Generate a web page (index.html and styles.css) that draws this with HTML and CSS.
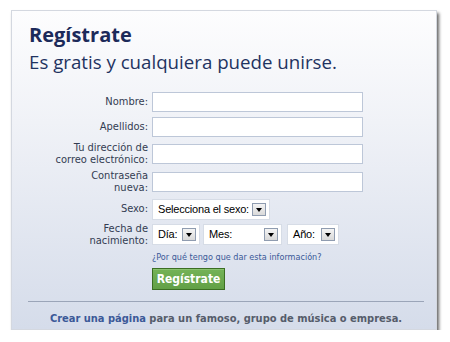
FILE: index.html
```html
<!DOCTYPE html>
<html lang="es">
<head>
    <meta charset="UTF-8">
    <title>Regístrate</title>
    <link rel="stylesheet" href="styles.css">
</head>
<body>
<div class="signup-box">
    <h1>Regístrate</h1>
    <h2>Es gratis y cualquiera puede unirse.</h2>

    <form class="signup-form" onsubmit="return false;">
        <div class="row">
            <label class="field-label">Nombre:</label>
            <input type="text" class="text-input">
        </div>
        <div class="row">
            <label class="field-label">Apellidos:</label>
            <input type="text" class="text-input">
        </div>
        <div class="row row-tall">
            <label class="field-label">Tu dirección de<br>correo electrónico:</label>
            <input type="text" class="text-input">
        </div>
        <div class="row row-tall">
            <label class="field-label">Contraseña<br>nueva:</label>
            <input type="password" class="text-input">
        </div>
        <div class="row row-sex">
            <label class="field-label">Sexo:</label>
            <span class="select select-sex">Selecciona el sexo:<span class="arrow"></span></span>
        </div>
        <div class="row row-tall">
            <label class="field-label">Fecha de<br>nacimiento:</label>
            <div class="date-selects">
                <span class="select select-day">Día:<span class="arrow"></span></span>
                <span class="select select-month">Mes:<span class="arrow"></span></span>
                <span class="select select-year">Año:<span class="arrow"></span></span>
            </div>
        </div>
        <div class="row row-link">
            <span class="field-label"></span>
            <a href="#" class="why-link">¿Por qué tengo que dar esta información?</a>
        </div>
        <div class="row row-button">
            <span class="field-label"></span>
            <button type="submit" class="signup-btn">Regístrate</button>
        </div>
    </form>

    <div class="footer-note">
        <a href="#">Crear una página</a> para un famoso, grupo de música o empresa.
    </div>
</div>
</body>
</html>
```

FILE: styles.css
```css
body {
    margin: 0;
    background-color: #fff;
    font-family: "DejaVu Sans Condensed", "DejaVu Sans", sans-serif;
}
.signup-box {
    box-sizing: border-box;
    width: 426px;
    height: 320px;
    margin: 10px 0 0 11px;
    padding: 12px 13px 0 17px;
    border: 1px solid #d4d8e0;
    background: linear-gradient(#fdfdfe, #f0f2f7 35%, #d5dcea);
    box-shadow: 2px 3px 3px rgba(0, 0, 0, 0.6);
}
h1 {
    margin: 0;
    font-family: "Open Sans", "Noto Sans", sans-serif;
    font-size: 20px;
    line-height: 24px;
    font-weight: bold;
    color: #1c2a5a;
}
h2 {
    margin: 0;
    font-family: "Open Sans", "Noto Sans", sans-serif;
    font-size: 18.7px;
    line-height: 29px;
    font-weight: normal;
    color: #1f3361;
}
.signup-form {
    margin-top: 16px;
}
.row {
    display: flex;
    align-items: center;
    margin-bottom: 5px;
    height: 20px;
}
.row-tall {
    height: 23px;
}
.row-sex {
    height: 22px;
    margin-bottom: 3px;
}
.field-label {
    flex: 0 0 119px;
    margin-right: 4px;
    text-align: right;
    font-size: 11px;
    line-height: 11.5px;
    color: #333c52;
}
.text-input {
    box-sizing: border-box;
    width: 211px;
    height: 20px;
    margin: 0;
    border: 1px solid #bdc7d8;
    background: #fff;
}
.select {
    position: relative;
    box-sizing: border-box;
    display: inline-block;
    height: 21px;
    padding: 0 0 0 5px;
    border: 1px solid #d6dce6;
    background: #fff;
    font-family: "Liberation Sans", Arial, sans-serif;
    font-size: 11px;
    letter-spacing: -0.2px;
    line-height: 19px;
    color: #000;
    white-space: nowrap;
}
.select-sex { width: 118px; }
.select-day { width: 48px; }
.select-month { width: 79px; }
.select-year { width: 52px; }
.date-selects {
    display: flex;
    gap: 3px;
}
.select-year { margin-left: 2px; }
.arrow {
    position: absolute;
    right: 3px;
    top: 3px;
    box-sizing: border-box;
    width: 14px;
    height: 13px;
    border: 1px solid #8f9cb0;
    background: linear-gradient(#f4f4f4, #d9d9d9);
}
.arrow::after {
    content: "";
    position: absolute;
    left: 3px;
    top: 4px;
    border-left: 3.5px solid transparent;
    border-right: 3.5px solid transparent;
    border-top: 4px solid #000;
}
.row-link {
    height: 12px;
    margin-top: 0;
    margin-bottom: 5px;
}
.why-link {
    font-size: 9px;
    color: #3b5998;
    text-decoration: none;
}
.row-button {
    height: 22px;
}
.signup-btn {
    height: 22px;
    width: 73px;
    padding: 0;
    border: 1px solid #3b6e22;
    background: linear-gradient(#74b357, #62a046);
    color: #fff;
    font-family: "DejaVu Sans Condensed", "DejaVu Sans", sans-serif;
    font-size: 12px;
    font-weight: bold;
    box-shadow: inset 0 1px 0 #8ac26f;
}
.footer-note {
    margin-top: 11px;
    margin-left: -1px;
    padding-top: 10px;
    width: 396px;
    border-top: 1px solid #9ba5b8;
    text-align: center;
    font-size: 11px;
    font-weight: bold;
    color: #555c6a;
}
.footer-note a {
    color: #3b5998;
    text-decoration: none;
}
```
